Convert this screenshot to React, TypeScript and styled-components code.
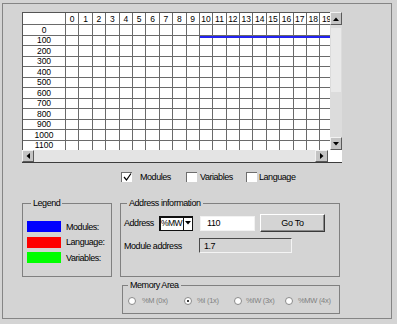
import React from "react";
import styled, { createGlobalStyle } from "styled-components";

const GlobalStyle = createGlobalStyle`
  html, body {
    margin: 0;
    padding: 0;
    background: #d4d4d4;
  }
  body {
    font-family: "Liberation Sans", Arial, sans-serif;
    color: #000;
  }
`;

const COLS = Array.from({ length: 20 }, (_, i) => i);
const ROWS = Array.from({ length: 12 }, (_, i) => i * 100);

type Dir = "up" | "down" | "left" | "right";

const ARROWS: Record<Dir, { box: string; pts: string; w: number; h: number }> = {
  up: { box: "0 0 6 4", pts: "0,4 6,4 3,0.5", w: 6, h: 4 },
  down: { box: "0 0 6 4", pts: "0,0 6,0 3,3.5", w: 6, h: 4 },
  left: { box: "0 0 4 6", pts: "4,0 4,6 0.5,3", w: 4, h: 6 },
  right: { box: "0 0 4 6", pts: "0,0 0,6 3.5,3", w: 4, h: 6 },
};

const Arrow = ({ dir }: { dir: Dir }) => {
  const a = ARROWS[dir];
  return (
    <svg width={a.w} height={a.h} viewBox={a.box}>
      <polygon points={a.pts} fill="#000" />
    </svg>
  );
};

const Frame = styled.div`
  box-sizing: border-box;
  margin: 3px 0 0 2px;
  width: 390px;
  height: 316px;
  border: 1px solid #858585;
  padding: 8px 0 0 19px;
  display: flex;
  flex-direction: column;
`;

/* ---------- memory grid ---------- */

const GridControl = styled.div`
  display: grid;
  grid-template-columns: 308px 12px;
  grid-template-rows: 138px 12px;
  width: 320px;
  border-bottom: 1px solid #3c3c3c;
`;

const Table = styled.div`
  position: relative;
  overflow: hidden;
  box-sizing: border-box;
  border-left: 1px solid #555;
  border-top: 1px solid #555;
  background: #fff;
  display: grid;
  grid-template-columns: 43px repeat(20, 13.4px);
  grid-template-rows: 12px repeat(12, 10.5px);
  font-size: 8.5px;
  line-height: 1;
`;

const Cell = styled.div<{ $head?: boolean }>`
  box-sizing: border-box;
  border-right: 1px solid #6a6a6a;
  border-bottom: 1px solid #6a6a6a;
  display: flex;
  align-items: center;
  justify-content: center;
  padding-top: ${(p) => (p.$head ? 1 : 0)}px;
  white-space: nowrap;
`;

const ModuleLine = styled.div`
  position: absolute;
  top: 23px;
  left: 177px;
  width: 130px;
  height: 2px;
  background: #2323f0;
`;

const VScroll = styled.div`
  display: flex;
  flex-direction: column;
  background: #dcdcdc;
`;

const HScroll = styled.div`
  grid-column: 1 / span 2;
  display: flex;
`;

const HTrack = styled.div`
  width: 306px;
  display: flex;
  background: #e4e4e4;
`;

const Corner = styled.div`
  flex: 1;
  background: #fff;
`;

const ScrollButton = styled.div<{ $w?: number; $h?: number }>`
  box-sizing: border-box;
  flex: none;
  width: ${(p) => (p.$w ? `${p.$w}px` : "100%")};
  height: ${(p) => (p.$h ? `${p.$h}px` : "100%")};
  background: #c4c4c4;
  border: 1px solid;
  border-color: #f2f2f2 #5a5a5a #5a5a5a #f2f2f2;
  display: flex;
  align-items: center;
  justify-content: center;
`;

const Track = styled.div`
  flex: 1;
  display: flex;
  flex-direction: column;
  padding-top: 3px;
`;

const Thumb = styled.div`
  height: 64px;
  margin: 0 1px;
  background: #e9e9e9;
`;

/* ---------- filters ---------- */

const Options = styled.div`
  display: flex;
  align-items: center;
  height: 11px;
  margin: 8px 0 0 99px;
  font-size: 9px;
  letter-spacing: -0.45px;
`;

const Option = styled.label<{ $w?: number; $gap: number }>`
  display: flex;
  align-items: center;
  gap: ${(p) => p.$gap}px;
  width: ${(p) => (p.$w ? `${p.$w}px` : "auto")};
`;

const CheckBox = styled.span`
  box-sizing: border-box;
  width: 11px;
  height: 10px;
  background: #fff;
  border-top: 1px solid #6e6e6e;
  border-left: 1px solid #6e6e6e;
  display: flex;
  align-items: center;
  justify-content: center;
`;

/* ---------- group boxes ---------- */

const Lower = styled.div`
  display: flex;
  align-items: flex-start;
  margin-top: 16px;
`;

const Column = styled.div`
  display: flex;
  flex-direction: column;
  margin-left: 8px;
`;

const GroupBox = styled.fieldset<{ $w: number; $h: number; $pad: string }>`
  box-sizing: border-box;
  width: ${(p) => p.$w}px;
  height: ${(p) => p.$h}px;
  min-width: 0;
  margin: 0;
  padding: ${(p) => p.$pad};
  border: 1px solid #808080;
`;

const MemoryBox = styled(GroupBox)`
  margin: 3px 0 0 2px;
`;

const Title = styled.legend<{ $ml: number }>`
  margin-left: ${(p) => p.$ml}px;
  padding: 0 2px;
  font-size: 9px;
  line-height: 10px;
  letter-spacing: -0.45px;
`;

const LegendList = styled.div`
  display: flex;
  flex-direction: column;
  gap: 4.5px;
`;

const LegendRow = styled.div`
  display: flex;
  align-items: center;
  gap: 5px;
  height: 11px;
  font-size: 9px;
  letter-spacing: -0.45px;
`;

const Swatch = styled.span<{ $c: string }>`
  width: 34px;
  height: 11px;
  background: ${(p) => p.$c};
`;

const FieldRow = styled.div<{ $h: number }>`
  display: flex;
  align-items: center;
  height: ${(p) => p.$h}px;
  font-size: 9px;
  letter-spacing: -0.45px;
  & + & {
    margin-top: 6px;
  }
`;

const Label = styled.span<{ $w: number }>`
  width: ${(p) => p.$w}px;
  flex: none;
`;

const Select = styled.div`
  box-sizing: border-box;
  width: 34px;
  height: 15px;
  margin-right: 7px;
  background: #fff;
  border: 1px solid #111;
  box-shadow: inset 1px 1px 0 #111;
  display: flex;
  align-items: center;
  padding-left: 1px;
`;

const SelectText = styled.span`
  flex: 1;
  font-size: 8.5px;
  letter-spacing: -0.6px;
  white-space: nowrap;
`;

const SelectArrow = styled.span`
  width: 8px;
  align-self: stretch;
  border-left: 1px solid #111;
  display: flex;
  align-items: center;
  justify-content: center;
`;

const TextInput = styled.div`
  box-sizing: border-box;
  width: 55px;
  height: 15px;
  margin-right: 5px;
  background: #fff;
  border: 1px solid #f2f2f2;
  padding-left: 6px;
  display: flex;
  align-items: center;
`;

const Button = styled.button`
  box-sizing: border-box;
  width: 65px;
  height: 18px;
  padding: 0;
  background: #d4d4d4;
  border: 1px solid;
  border-color: #fff #3a3a3a #3a3a3a #fff;
  box-shadow: inset -1px -1px 0 #8a8a8a;
  font-family: inherit;
  font-size: 9px;
  letter-spacing: -0.3px;
  color: #000;
`;

const ReadOnly = styled.div`
  box-sizing: border-box;
  width: 93px;
  height: 15px;
  border: 1px solid;
  border-color: #4a4a4a #f4f4f4 #f4f4f4 #4a4a4a;
  padding-left: 4px;
  display: flex;
  align-items: center;
`;

const Radios = styled.div`
  display: grid;
  grid-template-columns: 56px 50px 51px auto;
  height: 9px;
  align-items: center;
`;

const Radio = styled.label<{ $gap: number }>`
  display: flex;
  align-items: center;
  gap: ${(p) => p.$gap}px;
  font-size: 7.5px;
  letter-spacing: -0.3px;
  color: #808080;
  white-space: nowrap;
`;

const Dot = styled.span<{ $on?: boolean }>`
  box-sizing: border-box;
  width: 8px;
  height: 8px;
  border-radius: 50%;
  background: #fff;
  border: 1px solid #8a8a8a;
  display: flex;
  align-items: center;
  justify-content: center;
  &::after {
    content: "";
    width: 2px;
    height: 2px;
    border-radius: 50%;
    background: ${(p) => (p.$on ? "#000" : "transparent")};
  }
`;

const legend = [
  { c: "#0000ff", t: "Modules:" },
  { c: "#ff0000", t: "Language:" },
  { c: "#00ff00", t: "Variables:" },
];

const areas = [
  { t: "%M (0x)", gap: 6 },
  { t: "%I (1x)", gap: 5, on: true },
  { t: "%IW (3x)", gap: 4 },
  { t: "%MW (4x)", gap: 5 },
];

export default function App() {
  return (
    <>
      <GlobalStyle />
      <Frame>
        <GridControl>
          <Table>
            <Cell $head />
            {COLS.map((c) => (
              <Cell key={c} $head>
                {c}
              </Cell>
            ))}
            {ROWS.map((r) => (
              <React.Fragment key={r}>
                <Cell>{r}</Cell>
                {COLS.map((c) => (
                  <Cell key={c} />
                ))}
              </React.Fragment>
            ))}
            <ModuleLine />
          </Table>
          <VScroll>
            <ScrollButton $h={13}>
              <Arrow dir="up" />
            </ScrollButton>
            <Track>
              <Thumb />
            </Track>
            <ScrollButton $h={13}>
              <Arrow dir="down" />
            </ScrollButton>
          </VScroll>
          <HScroll>
            <HTrack>
              <ScrollButton $w={12}>
                <Arrow dir="left" />
              </ScrollButton>
              <Track />
              <ScrollButton $w={13}>
                <Arrow dir="right" />
              </ScrollButton>
            </HTrack>
            <Corner />
          </HScroll>
        </GridControl>

        <Options>
          <Option $w={65} $gap={8}>
            <CheckBox>
              <svg width="9" height="8" viewBox="0 0 9 8">
                <polyline points="1,4 3.5,7 8,0.5" fill="none" stroke="#000" strokeWidth="1.2" />
              </svg>
            </CheckBox>
            Modules
          </Option>
          <Option $w={60} $gap={3}>
            <CheckBox />
            Variables
          </Option>
          <Option $gap={2}>
            <CheckBox />
            Language
          </Option>
        </Options>

        <Lower>
          <GroupBox $w={90} $h={79} $pad="13px 0 0 4px">
            <Title $ml={4}>Legend</Title>
            <LegendList>
              {legend.map((l) => (
                <LegendRow key={l.t}>
                  <Swatch $c={l.c} />
                  {l.t}
                </LegendRow>
              ))}
            </LegendList>
          </GroupBox>

          <Column>
            <GroupBox $w={220} $h={79} $pad="6px 0 0 3px">
              <Title $ml={3}>Address information</Title>
              <FieldRow $h={18}>
                <Label $w={35}>Address</Label>
                <Select>
                  <SelectText>%MW</SelectText>
                  <SelectArrow>
                    <Arrow dir="down" />
                  </SelectArrow>
                </Select>
                <TextInput>110</TextInput>
                <Button>Go To</Button>
              </FieldRow>
              <FieldRow $h={15}>
                <Label $w={75}>Module address</Label>
                <ReadOnly>1.7</ReadOnly>
              </FieldRow>
            </GroupBox>

            <MemoryBox $w={218} $h={34} $pad="6px 0 0 5px">
              <Title $ml={0}>Memory Area</Title>
              <Radios>
                {areas.map((a) => (
                  <Radio key={a.t} $gap={a.gap}>
                    <Dot $on={a.on} />
                    {a.t}
                  </Radio>
                ))}
              </Radios>
            </MemoryBox>
          </Column>
        </Lower>
      </Frame>
    </>
  );
}
